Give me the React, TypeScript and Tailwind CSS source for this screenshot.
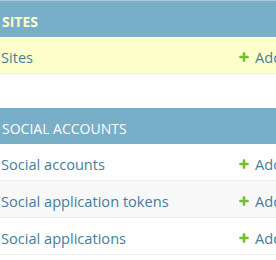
const font = { fontFamily: '"Open Sans", "Liberation Sans", sans-serif' };

type Row = { name: string; current?: boolean };

const PlusIcon = () => (
  <svg width="12" height="12" viewBox="0 0 1792 1792" className="mr-[5px]">
    <path
      fill="#70bf2b"
      d="M1600 796v192q0 40-28 68t-68 28h-416v416q0 40-28 68t-68 28h-192q-40 0-68-28t-28-68v-416h-416q-40 0-68-28t-28-68v-192q0-40 28-68t68-28h416v-416q0-40 28-68t68-28h192q40 0 68 28t28 68v416h416q40 0 68 28t28 68z"
    />
  </svg>
);

const Module = ({
  title,
  current,
  rows,
}: {
  title: string;
  current?: boolean;
  rows: Row[];
}) => (
  <div className="w-[320px]">
    <div
      className={`flex h-[36px] items-center bg-[#79aec8] pl-[2px] pt-[4px] text-[14px] uppercase ${
        current ? 'font-bold text-[#ffffcc]' : 'text-white'
      }`}
    >
      {title}
    </div>
    {rows.map((row, i) => (
      <div
        key={row.name}
        className={`flex h-[37px] items-center border-b border-[#eeeeee] pt-[5px] text-[14.6px] font-medium text-[#447e9b] ${
          row.current ? 'bg-[#ffffcc]' : i % 2 === 1 ? 'bg-[#f8f8f8]' : 'bg-white'
        }`}
      >
        <span className="w-[238px] pl-[1px]">{row.name}</span>
        <span className="flex items-center">
          <PlusIcon />
          Add
        </span>
      </div>
    ))}
  </div>
);

export default function App() {
  return (
    <div style={font} className="h-[260px] w-[276px] overflow-hidden bg-white">
      <div className="h-[1px] bg-[#a9cbdc]" />
      <Module title="Sites" current rows={[{ name: 'Sites', current: true }]} />
      <div className="h-[34px]" />
      <Module
        title="Social accounts"
        rows={[
          { name: 'Social accounts' },
          { name: 'Social application tokens' },
          { name: 'Social applications' },
        ]}
      />
    </div>
  );
}
